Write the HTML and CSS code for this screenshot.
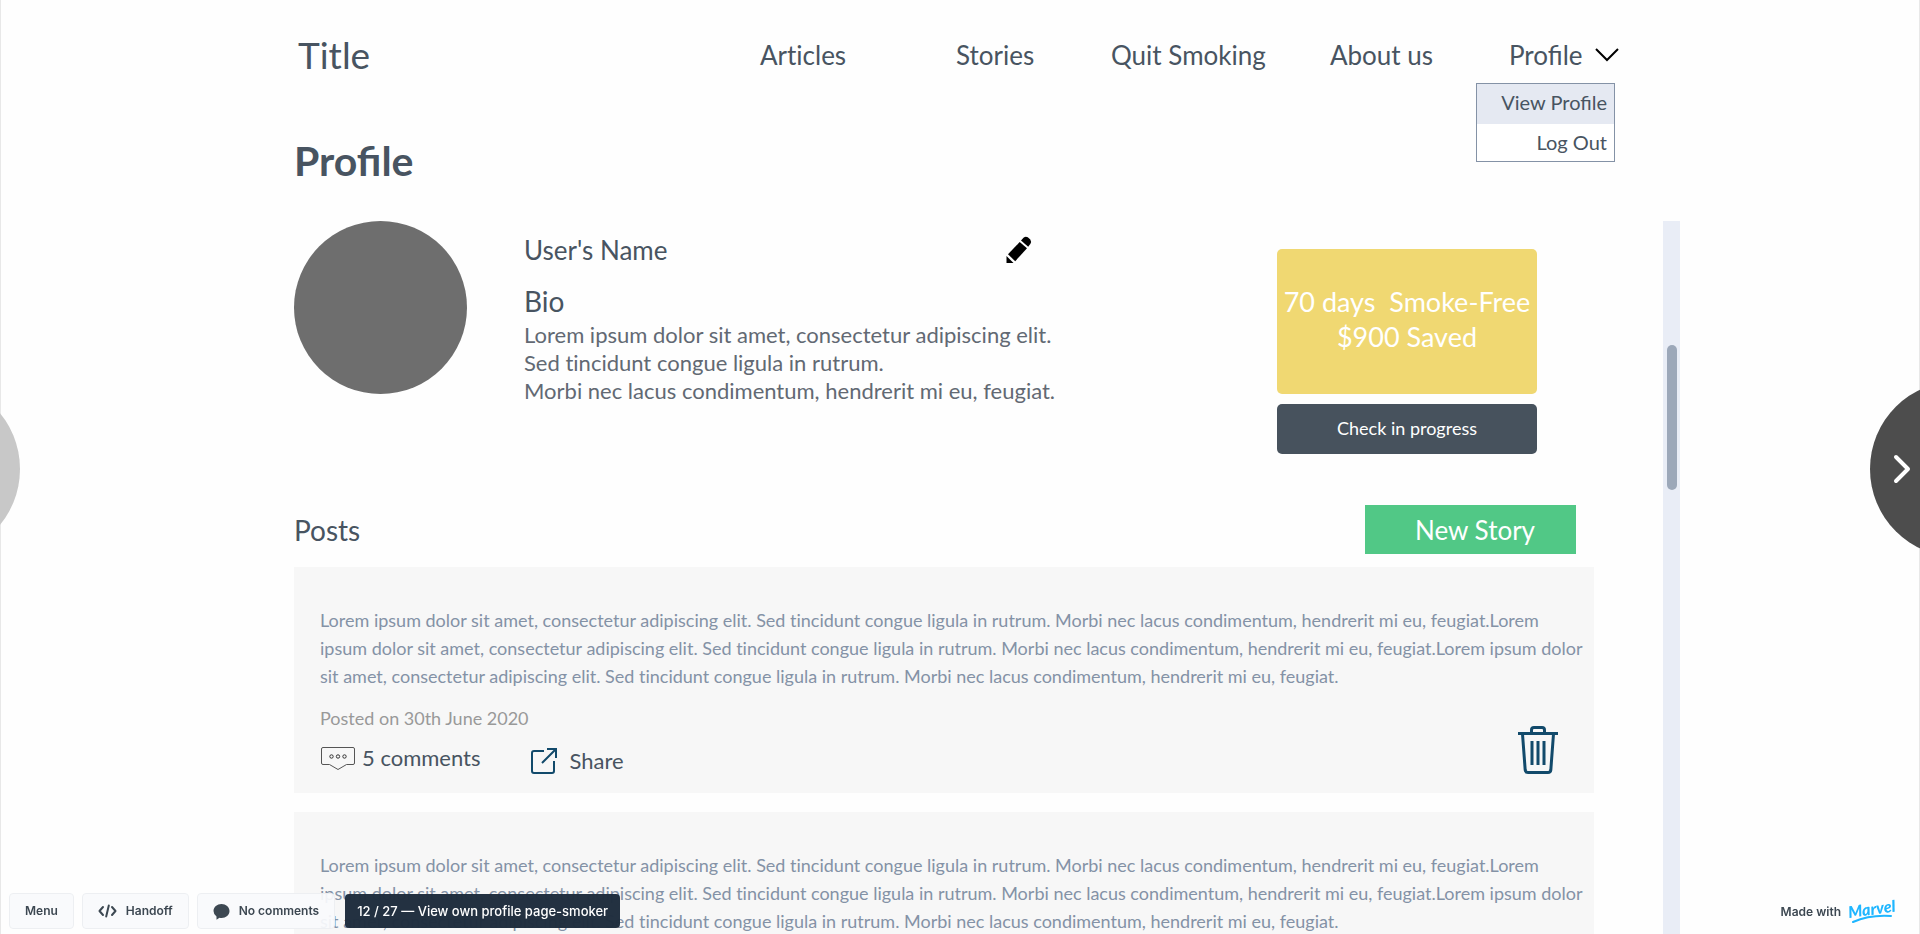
FILE: index.html
```html
<!DOCTYPE html>
<html lang="en">
<head>
<meta charset="utf-8">
<title>View own profile page-smoker</title>
<link rel="stylesheet" href="styles.css">
</head>
<body>
<div class="page">
  <div class="shell">
    <header class="header">
      <a class="brand" href="#">Title</a>
      <nav class="nav">
        <a href="#">Articles</a>
        <a href="#">Stories</a>
        <a href="#">Quit Smoking</a>
        <a href="#">About us</a>
        <div class="account">
          <button class="account-toggle" type="button">Profile
            <svg class="chevron" width="24" height="16" viewBox="0 0 24 16" fill="none" stroke="#000" stroke-width="2"><path d="M1 2l11 11L23 2"/></svg>
          </button>
          <div class="menu">
            <a class="menu-item active" href="#">View Profile</a>
            <a class="menu-item" href="#">Log Out</a>
          </div>
        </div>
      </nav>
    </header>

    <h1 class="page-title">Profile</h1>

    <div class="scroll-area">
      <main class="content">
        <section class="profile">
          <div class="avatar"></div>
          <div class="info">
            <div class="name-row">
              <h2 class="name">User's Name</h2>
              <button class="icon-button" type="button" aria-label="Edit profile">
                <svg width="27" height="28" viewBox="0 0 27 28" fill="#000"><path d="M16 4.500l2.500-2.700Q20.500 0 22.800 1.300L25.300 3.600Q26.800 5.800 25.300 8L23.200 10.800z"/><path d="M14.700 6L22 12.300 10.200 25.200 3 18.300z"/><path d="M1.500 20L8.500 27H1.500z"/></svg>
              </button>
            </div>
            <h3 class="bio-title">Bio</h3>
            <p class="bio">Lorem ipsum dolor sit amet, consectetur adipiscing elit.<br>Sed tincidunt congue ligula in rutrum.<br>Morbi nec lacus condimentum, hendrerit mi eu, feugiat.</p>
          </div>
          <div class="stats">
            <p class="streak">70 days&nbsp; Smoke-Free<br>$900 Saved</p>
            <button class="check-in" type="button">Check in progress</button>
          </div>
        </section>

        <div class="posts-head">
          <h2 class="posts-title">Posts</h2>
          <button class="new-story" type="button">New Story</button>
        </div>

        <article class="post">
          <p class="post-text">Lorem ipsum dolor sit amet, consectetur adipiscing elit. Sed tincidunt congue ligula in rutrum. Morbi nec lacus condimentum, hendrerit mi eu, feugiat.Lorem<br>ipsum dolor sit amet, consectetur adipiscing elit. Sed tincidunt congue ligula in rutrum. Morbi nec lacus condimentum, hendrerit mi eu, feugiat.Lorem ipsum dolor<br>sit amet, consectetur adipiscing elit. Sed tincidunt congue ligula in rutrum. Morbi nec lacus condimentum, hendrerit mi eu, feugiat.</p>
          <footer class="post-footer">
            <div class="post-meta">
              <p class="date">Posted on 30th June 2020</p>
              <div class="actions">
                <a class="comments" href="#">
                  <svg width="36" height="26" viewBox="0 0 36 26" fill="none" stroke="#555" stroke-width="1"><path d="M3 2.500h30q1.500 0 1.500 1.500v14q0 1.500-1.500 1.500h-6.500L18 24.500 9.500 19.500H3Q1.500 19.500 1.500 18V4Q1.500 2.500 3 2.500z"/><g stroke="#333"><circle cx="11.500" cy="11.500" r="1.700"/><circle cx="18" cy="11.500" r="1.700"/><circle cx="24.500" cy="11.500" r="1.700"/></g></svg>
                  5 comments</a>
                <a class="share" href="#">
                  <svg width="26" height="26" viewBox="0 0 26 26" fill="none" stroke="#124a6b" stroke-width="2"><path d="M13 3H3Q1 3 1 5v18q0 2 2 2h18q2 0 2-2V13"/><path d="M11 15L24 2M16 1h9v9"/></svg>
                  Share</a>
              </div>
            </div>
            <button class="icon-button trash" type="button" aria-label="Delete post">
              <svg width="40" height="48" viewBox="0 0 40 48" fill="none" stroke="#124a6b" stroke-width="3"><path d="M0 7.500h40M13.500 7V4q0-2.500 2.500-2.500h8q2.500 0 2.500 2.500v3"/><path d="M4.500 8l2.700 36q.3 2.500 2.800 2.500h20q2.500 0 2.800-2.500L35.500 8M14 15v24M20 15v24M26 15v24"/></svg>
            </button>
          </footer>
        </article>

        <article class="post">
          <p class="post-text">Lorem ipsum dolor sit amet, consectetur adipiscing elit. Sed tincidunt congue ligula in rutrum. Morbi nec lacus condimentum, hendrerit mi eu, feugiat.Lorem<br>ipsum dolor sit amet, consectetur adipiscing elit. Sed tincidunt congue ligula in rutrum. Morbi nec lacus condimentum, hendrerit mi eu, feugiat.Lorem ipsum dolor<br>sit amet, consectetur adipiscing elit. Sed tincidunt congue ligula in rutrum. Morbi nec lacus condimentum, hendrerit mi eu, feugiat.</p>
        </article>
      </main>
      <div class="track"><div class="thumb"></div></div>
    </div>
  </div>
</div>

<button class="pager prev" type="button" aria-label="Previous screen"></button>
<button class="pager next" type="button" aria-label="Next screen">
  <svg width="18" height="30" viewBox="0 0 18 30" fill="none" stroke="#fff" stroke-width="4" stroke-linecap="round" stroke-linejoin="round"><path d="M3 3l12 12L3 27"/></svg>
</button>

<div class="toolbar">
  <button class="tool" type="button">Menu</button>
  <button class="tool" type="button">
    <svg width="19" height="14" viewBox="0 0 19 14" fill="none" stroke="#3d4852" stroke-width="2" stroke-linecap="round" stroke-linejoin="round"><path d="M5 3L1.500 7 5 11M14 3l3.500 4L14 11M10.800 1.500L8.200 12.500"/></svg>
    Handoff</button>
  <button class="tool" type="button">
    <svg width="17" height="17" viewBox="0 0 17 17" fill="#3d4852"><path d="M8.500 1c4.400 0 8 3 8 7s-3.600 7-8 7q-1 0-2-.3L3.500 16.800V13.500Q.5 11.300.5 8c0-4 3.600-7 8-7z"/></svg>
    No comments</button>
  <div class="screen-label">12 / 27 — View own profile page-smoker</div>
</div>

<a class="made-with" href="#">Made with
  <svg class="logo" width="54" height="28" viewBox="0 0 54 28"><text class="logo-text" x="1" y="20" transform="rotate(-8 1 20)">Marvel</text><path d="M5 24Q22 16.500 43 18" fill="none" stroke="#1fb6ff" stroke-width="2" stroke-linecap="round"/></svg>
</a>
</body>
</html>
```

FILE: styles.css
```css
* { box-sizing: border-box; }

body {
  margin: 0;
  background: #fefefe;
  color: #485461;
  font-family: Lato, "Liberation Sans", sans-serif;
  font-variant-ligatures: none;
}

h1, h2, h3, p { margin: 0; font-weight: 400; }
a { color: inherit; text-decoration: none; }
button { border: 0; padding: 0; background: none; color: inherit; font: inherit; cursor: pointer; }
svg { flex: none; display: block; }

.page {
  height: 100vh;
  overflow: hidden;
  display: grid;
  grid-template-columns: 294fr 1386fr 240fr;
  box-shadow: inset 1px 0 #e8e8e8, inset -1px 0 #e8e8e8;
}

.shell {
  grid-column: 2;
  min-width: 0;
  min-height: 0;
  display: flex;
  flex-direction: column;
}

.header {
  display: flex;
  align-items: center;
  justify-content: space-between;
  height: 110px;
  padding: 0 61px 0 4px;
}

.brand { font-size: 37px; line-height: 44px; }

.nav {
  display: grid;
  grid-template-columns: 196px 155px 219px 179px 110px;
  font-size: 26px;
  line-height: 32px;
}

.account { position: relative; }
.account-toggle { display: flex; align-items: center; justify-content: space-between; width: 100%; }
.account, .account-toggle, .page-title { font-variant-ligatures: normal; }

.menu {
  position: absolute;
  top: 44px;
  right: 4px;
  width: 139px;
  border: 1px solid #8492a6;
  background: #fff;
  font-size: 20px;
  line-height: 37px;
  text-align: right;
}
.menu-item { display: block; padding: 0 7px; }
.menu-item.active { padding-bottom: 3px; background: #e5e9f2; }

.page-title {
  margin: 27px 0 36px;
  font-size: 41px;
  line-height: 48px;
  font-weight: 700;
}

.scroll-area { flex: 1; min-height: 0; display: flex; overflow: hidden; }
.content { flex: 1; min-width: 0; margin-right: 69px; }

.track { width: 17px; background: #e9edf6; padding: 124px 3px 0 4px; }
.thumb { height: 145px; border-radius: 5px; background: #9ca8b9; }

.profile { display: flex; align-items: flex-start; padding-right: 57px; }
.avatar { flex: none; width: 173px; height: 173px; border-radius: 50%; background: #6e6e6e; }
.info { width: 526px; margin-left: 57px; padding-top: 13px; }
.name-row { display: flex; align-items: center; justify-content: space-between; padding-right: 18px; }
.name { font-size: 26px; line-height: 32px; }
.bio-title { margin: 18px 0 3px; font-size: 28px; line-height: 34px; }
.bio { font-size: 22px; line-height: 28px; color: #626973; white-space: nowrap; }

.stats {
  display: grid;
  grid-template-columns: minmax(0, 1fr);
  gap: 10px;
  width: 260px;
  margin-left: auto;
  padding-top: 28px;
}
.streak {
  height: 145px;
  padding-top: 35px;
  border-radius: 5px;
  background: #f0d872;
  color: #fff;
  font-size: 27px;
  line-height: 35px;
  text-align: center;
  white-space: nowrap;
}
.check-in { height: 50px; padding-bottom: 2px; border-radius: 5px; background: #47525d; color: #fff; font-size: 18px; line-height: 24px; }

.posts-head {
  display: flex;
  align-items: center;
  justify-content: space-between;
  margin: 51px 0 13px;
  padding-right: 18px;
}
.posts-title { font-size: 28px; line-height: 34px; }
.new-story {
  height: 49px;
  padding: 0 41px 0 50px;
  background: #51c886;
  color: #fff;
  font-size: 26px;
  line-height: 34px;
}

.post { margin-bottom: 19px; padding: 39px 28px 15px 26px; background: #f7f7f7; }
.post-text { font-size: 18px; line-height: 28px; color: #8492a6; white-space: nowrap; }
.post-footer { display: flex; align-items: flex-end; justify-content: space-between; margin-top: 16px; padding-right: 8px; }
.date { font-size: 18px; line-height: 24px; color: #999; }
.actions { display: flex; gap: 50px; margin-top: 14px; font-size: 22px; line-height: 28px; }
.comments { display: flex; gap: 6px; height: 28px; align-items: center; }
.share { display: flex; gap: 13px; height: 34px; align-items: center; }
.trash { margin-bottom: 4px; }

.pager { position: fixed; top: calc(50% - 86px); width: 176px; height: 176px; border-radius: 50%; }
.prev { left: -156px; background: #c8c8c8; }
.next { right: -126px; padding-left: 23px; background: #4d4d4d; }

.toolbar {
  position: fixed;
  left: 9px;
  bottom: 5px;
  display: flex;
  align-items: center;
  gap: 8px;
  font: 600 12px/16px Inter, "Liberation Sans", sans-serif;
  color: #3d4852;
}
.tool {
  display: flex;
  align-items: center;
  gap: 9px;
  height: 36px;
  padding: 0 15px;
  border: 1px solid #edeff2;
  border-radius: 4px;
  background: rgba(249, 250, 252, 0.93);
}
.screen-label {
  margin-left: 2px;
  padding: 9px 12px;
  border-radius: 4px;
  background: rgba(31, 45, 61, 0.98);
  color: #fff;
  font-size: 13px;
  font-weight: 500;
}

.made-with {
  position: fixed;
  right: 18px;
  bottom: 8px;
  display: flex;
  align-items: center;
  gap: 7px;
  font: 600 12px/16px Inter, "Liberation Sans", sans-serif;
  color: #3d4852;
}
.logo { overflow: visible; }
.logo-text { font: italic 900 16px Lato, sans-serif; fill: #1fb6ff; }
```
